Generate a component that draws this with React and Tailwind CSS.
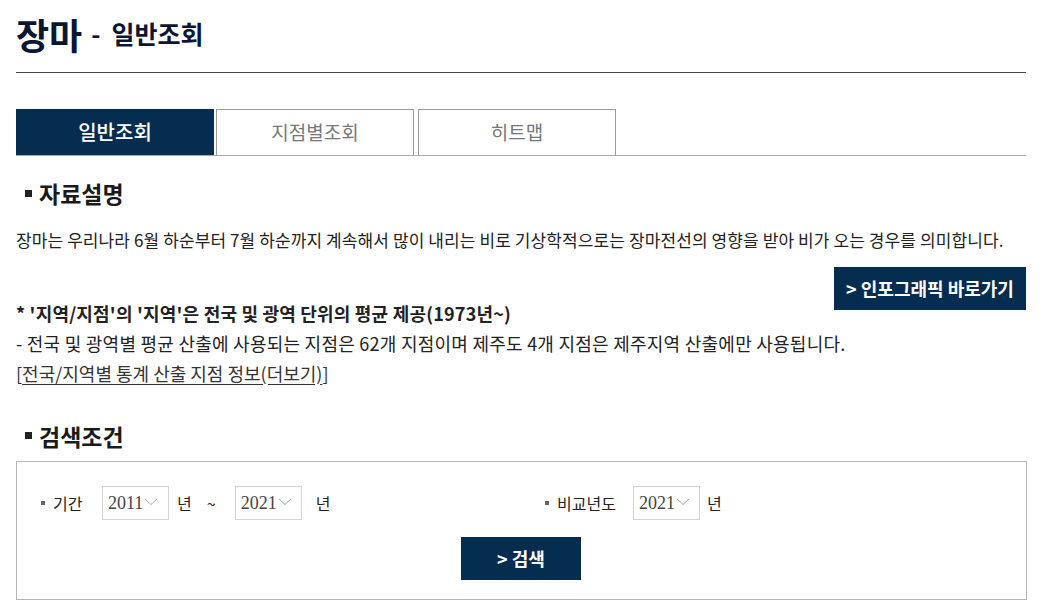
import React from "react";

const NAVY = "bg-[#042d4f]";

function YearSelect({ value }) {
  return (
    <div className="flex items-center h-[34px] w-[67px] border border-[#d4d4d4] pl-[5px] text-[18px] text-[#444] font-['Liberation_Serif',serif]">
      <span>{value}</span>
      <svg className="ml-[1px] mt-[-3px]" width="14" height="8" viewBox="0 0 14 8" fill="none">
        <path d="M1 1l6 5.5L13 1" stroke="#aaa" strokeWidth="1" />
      </svg>
    </div>
  );
}

function SectionTitle({ children }) {
  return (
    <h2 className="flex items-center text-[23px] font-bold text-[#1a1a1a] pl-[9px]">
      <span className="w-[7px] h-[7px] bg-[#222] mr-[7px]" />
      {children}
    </h2>
  );
}

export default function App() {
  return (
    <div className="px-[16px] w-[1042px] font-['Noto_Sans_CJK_KR','Noto_Sans',sans-serif] text-[#222]">
      {/* title */}
      <div className="h-[73px] border-b border-[#444] flex items-center pb-[4px] text-[#0b1633] font-bold">
        <span className="text-[36px] leading-[48px]">장마</span>
        <span className="text-[25px] leading-[48px] ml-[9px] mt-[-2px]">-</span>
        <span className="text-[25px] leading-[48px] ml-[11px] mt-[-3px]">일반조회</span>
      </div>

      {/* tabs */}
      <div className="mt-[36px] flex gap-[2px] border-b border-[#aaa]">
        <div className={`w-[198px] h-[46px] ${NAVY} text-white text-[20px] font-medium flex items-center justify-center`}>
          일반조회
        </div>
        <div className="w-[198px] h-[46px] border border-b-0 border-[#999] text-[#777] text-[19px] flex items-center justify-center">
          지점별조회
        </div>
        <div className="ml-[2px] w-[198px] h-[46px] border border-b-0 border-[#999] text-[#777] text-[19px] flex items-center justify-center">
          히트맵
        </div>
      </div>

      {/* 자료설명 */}
      <div className="mt-[20px]">
        <SectionTitle>자료설명</SectionTitle>
      </div>
      <p className="mt-[16px] text-[17px] leading-[26px] tracking-[0.1px] whitespace-nowrap">
        장마는 우리나라 6월 하순부터 7월 하순까지 계속해서 많이 내리는 비로 기상학적으로는 장마전선의 영향을 받아 비가 오는 경우를 의미합니다.
      </p>
      <div className="flex justify-end mt-[14px]">
        <button className={`${NAVY} w-[192px] h-[43px] text-white text-[18px] font-bold`}>&gt; 인포그래픽 바로가기</button>
      </div>
      <p className="mt-[-10px] text-[18px] font-bold leading-[26px] tracking-[0.2px]">
        * '지역/지점'의 '지역'은 전국 및 광역 단위의 평균 제공(1973년~)
      </p>
      <p className="mt-[4px] text-[18px] leading-[26px] tracking-[0.25px]">
        - 전국 및 광역별 평균 산출에 사용되는 지점은 62개 지점이며 제주도 4개 지점은 제주지역 산출에만 사용됩니다.
      </p>
      <p className="mt-[4px] text-[18px] leading-[26px] text-[#333]">
        [<span className="underline underline-offset-[3px]">전국/지역별 통계 산출 지점 정보(더보기)</span>]
      </p>

      {/* 검색조건 */}
      <div className="mt-[33px]">
        <SectionTitle>검색조건</SectionTitle>
      </div>
      <div className="mt-[8px] border border-[#b5b5b5] h-[139px] w-[1011px] pt-[24px]">
        <div className="flex items-center text-[16px]">
          <div className="flex items-center w-[528px] pl-[24px]">
            <span className="w-[4px] h-[4px] bg-[#666] mr-[8px]" />
            <span className="w-[49px]">기간</span>
            <YearSelect value="2011" />
            <span className="ml-[8px]">년</span>
            <span className="ml-[15px]">~</span>
            <div className="ml-[19px]"><YearSelect value="2021" /></div>
            <span className="ml-[14px]">년</span>
          </div>
          <div className="flex items-center">
            <span className="w-[4px] h-[4px] bg-[#666] mr-[8px]" />
            <span>비교년도</span>
            <div className="ml-[17px]"><YearSelect value="2021" /></div>
            <span className="ml-[7px]">년</span>
          </div>
        </div>
        <div className="flex justify-center mt-[17px] pr-[1px]">
          <button className={`${NAVY} w-[120px] h-[43px] text-white text-[18px] font-bold`}>&gt; 검색</button>
        </div>
      </div>
    </div>
  );
}
